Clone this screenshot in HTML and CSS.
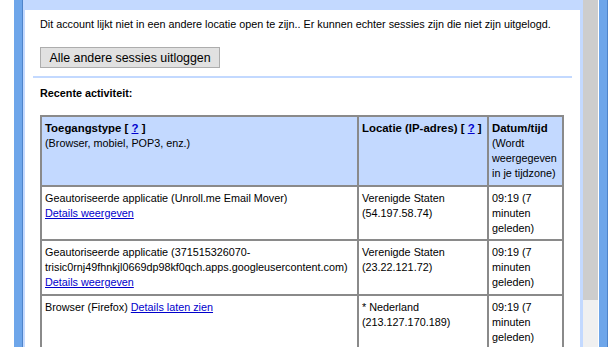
FILE: index.html
```html
<!DOCTYPE html>
<html lang="nl">
<head>
    <meta charset="UTF-8">
    <title>Activiteit op dit account</title>
    <link rel="stylesheet" href="styles.css">
</head>
<body>
    <div class="gutter"></div>
    <div class="rail"></div>

    <div class="frame">
        <div class="pane">
            <!-- Huidige sessies -->
            <p class="intro">Dit account lijkt niet in een andere locatie open te zijn.. Er kunnen echter sessies zijn die niet zijn uitgelogd.</p>
            <div class="intro">
                <button class="logout-button">Alle andere sessies uitloggen</button>
            </div>

            <div class="divider"></div>

            <!-- Recente activiteit -->
            <h4 class="section-title">Recente activiteit:</h4>
            <table class="activity">
                <tr class="head-row">
                    <th class="col-type"><b>Toegangstype [ <a href="#">?</a> ]</b><br>(Browser, mobiel, POP3, enz.)</th>
                    <th class="col-place"><b>Locatie (IP-adres) [ <a href="#">?</a> ]</b></th>
                    <th class="col-time"><b>Datum/tijd</b><br>(Wordt weergegeven in je tijdzone)</th>
                </tr>
                <tr>
                    <td>Geautoriseerde applicatie (Unroll.me Email Mover)<br><a href="#">Details weergeven</a></td>
                    <td>Verenigde Staten<br>(54.197.58.74)</td>
                    <td>09:19 (7 minuten geleden)</td>
                </tr>
                <tr>
                    <td>Geautoriseerde applicatie (371515326070-<wbr>trisic0rnj49fhnkjl0669dp98kf0qch.apps.googleusercontent.com)<br><a href="#">Details weergeven</a></td>
                    <td>Verenigde Staten<br>(23.22.121.72)</td>
                    <td>09:19 (7 minuten geleden)</td>
                </tr>
                <tr>
                    <td>Browser (Firefox) <a href="#">Details laten zien</a></td>
                    <td>* Nederland<br>(213.127.170.189)</td>
                    <td>09:19 (7 minuten geleden)</td>
                </tr>
            </table>
        </div>
    </div>

    <!-- Schuifbalk van het frame -->
    <div class="scrollbar">
        <div class="thumb"></div>
        <div class="track"></div>
    </div>
    <div class="gap"></div>
    <div class="rail"></div>
</body>
</html>
```

FILE: styles.css
```css
/* Pagina met blauwe randen */
body {
    margin: 0;
    width: 608px;
    height: 347px;
    overflow: hidden;
    display: flex;
    background-color: #fff;
    font-family: 'Liberation Sans', Arial, sans-serif;
    font-size: 10.8px;
    line-height: 15px;
    color: #000;
}

.gutter {
    width: 14px;
    flex-shrink: 0;
}

.rail {
    width: 8px;
    flex-shrink: 0;
    background-color: #6ea6ea;
    border-right: 1px solid #4f84c9;
}

.frame {
    flex: 1;
    padding: 10px 3px 0 2px;
    background-color: #c3d9ff; /* Lichtblauw */
    overflow: hidden;
}

.pane {
    height: 100%;
    padding: 7px 8px 0 8px;
    background-color: #fff;
}

.intro {
    margin: 0;
    padding-left: 7px;
}

.logout-button {
    margin-top: 15px;
    width: 180px;
    height: 21px;
    padding: 0;
    border: 1px solid #adadad;
    background-color: #e1e1e1;
    font-family: 'Liberation Sans', Arial, sans-serif;
    font-size: 12.4px;
    color: #000;
}

.divider {
    height: 2px;
    margin-top: 8px;
    background-color: #c3d9ff;
}

.section-title {
    margin: 8px 0 0 7px;
    font-size: 10.8px;
    font-weight: bold;
}

.activity {
    margin: 14px 0 0 7px;
    width: 524px;
    table-layout: fixed;
    border-collapse: separate;
    border-spacing: 0;
    border: 1px solid #8a8a8a;
}

.activity th,
.activity td {
    box-sizing: border-box;
    padding: 4px 3px 3.5px;
    border: 1px solid #8a8a8a;
    text-align: left;
    vertical-align: top;
    font-weight: normal;
}

.head-row th {
    background-color: #c3d9ff;
}

.col-type {
    width: 317px;
}

.col-place {
    width: 130px;
}

.col-time {
    width: 75px;
}

.activity b {
    font-size: 11.4px;
}

a {
    color: #0000cc;
}

.scrollbar {
    width: 15px;
    flex-shrink: 0;
    display: flex;
    flex-direction: column;
}

.thumb {
    height: 300px;
    background-color: #cdcdcd;
}

.track {
    flex: 1;
    background-color: #f0f0f0;
}

.gap {
    width: 1px;
    flex-shrink: 0;
}
```
